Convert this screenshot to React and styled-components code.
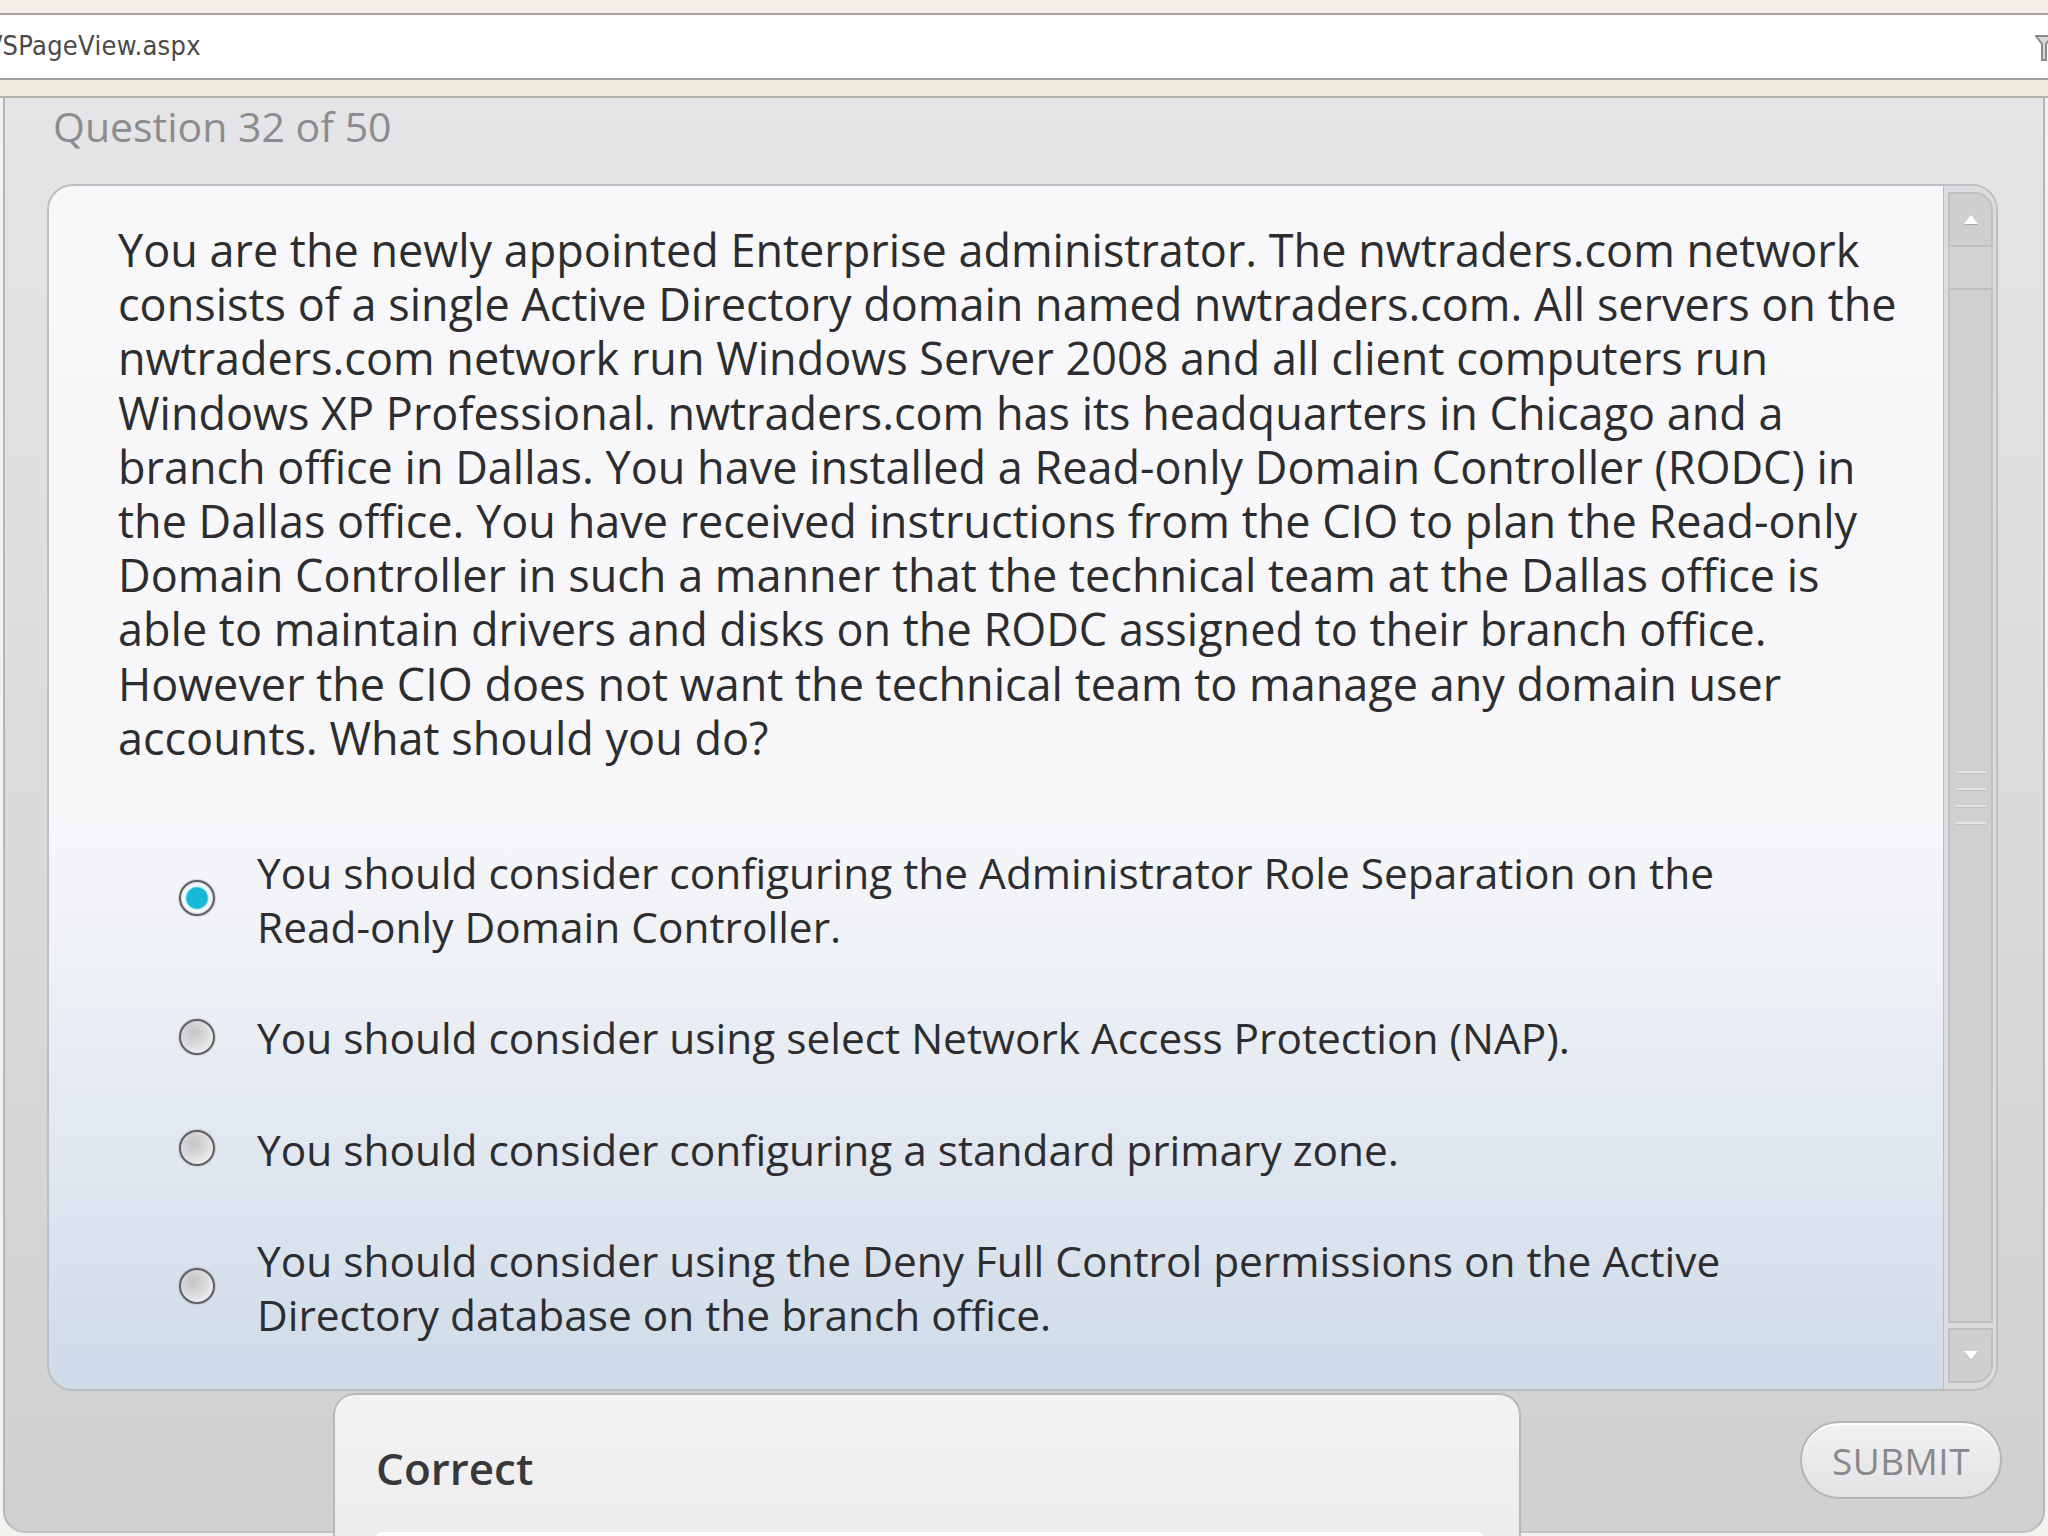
import React from "react";
import styled, { createGlobalStyle } from "styled-components";

const GlobalStyle = createGlobalStyle`
  html, body {
    margin: 0;
    padding: 0;
    background: #f3f2ee;
  }
  * {
    box-sizing: border-box;
  }
`;

const questionLines = [
  "You are the newly appointed Enterprise administrator. The nwtraders.com network",
  "consists of a single Active Directory domain named nwtraders.com. All servers on the",
  "nwtraders.com network run Windows Server 2008 and all client computers run",
  "Windows XP Professional. nwtraders.com has its headquarters in Chicago and a",
  "branch office in Dallas. You have installed a Read-only Domain Controller (RODC) in",
  "the Dallas office. You have received instructions from the CIO to plan the Read-only",
  "Domain Controller in such a manner that the technical team at the Dallas office is",
  "able to maintain drivers and disks on the RODC assigned to their branch office.",
  "However the CIO does not want the technical team to manage any domain user",
  "accounts. What should you do?",
];

const answers = [
  {
    id: "a",
    checked: true,
    lines: [
      "You should consider configuring the Administrator Role Separation on the",
      "Read-only Domain Controller.",
    ],
  },
  {
    id: "b",
    lines: ["You should consider using select Network Access Protection (NAP)."],
  },
  {
    id: "c",
    lines: ["You should consider configuring a standard primary zone."],
  },
  {
    id: "d",
    lines: [
      "You should consider using the Deny Full Control permissions on the Active",
      "Directory database on the branch office.",
    ],
  },
];

const Page = styled.div`
  width: 2048px;
  height: 1536px;
  overflow: hidden;
  display: flex;
  flex-direction: column;
  font-family: "Open Sans", "Noto Sans", sans-serif;
`;

const TopStrip = styled.div`
  flex: none;
  height: 13px;
  background: #f2f0e8;
`;

const AddressBar = styled.div`
  flex: none;
  height: 67px;
  background: #ffffff;
  border-top: 2px solid #a9a9a3;
  border-bottom: 2px solid #9f9f9a;
  display: flex;
  align-items: center;
  justify-content: space-between;
  padding-bottom: 2px;
`;

const Url = styled.span`
  font-family: "DejaVu Sans Condensed", "Liberation Sans", sans-serif;
  font-size: 27px;
  color: #4a4a4a;
  margin-left: -6px;
  letter-spacing: 0.3px;
`;

const InfoStrip = styled.div`
  flex: none;
  height: 18px;
  background: #edecdf;
  border-bottom: 2px solid #b3b3ab;
`;

const Panel = styled.div`
  flex: 1;
  min-height: 0;
  margin: 0 3px 3px 3px;
  display: flex;
  flex-direction: column;
  background: linear-gradient(to bottom, #e5e5e7 0%, #dcdcde 45%, #d0d0d1 100%);
  border-left: 2px solid #b6b6b8;
  border-right: 2px solid #b6b6b8;
  border-bottom: 2px solid #c2c2c4;
  border-radius: 0 0 22px 22px;
`;

const Header = styled.div`
  flex: none;
  padding: 4px 0 0 48px;
  height: 86px;
  font-size: 41px;
  line-height: 48px;
  color: #8c8c8e;
`;

const Card = styled.div`
  flex: none;
  height: 1207px;
  margin: 0 45px 0 42px;
  display: flex;
  border: 2px solid #bebec2;
  border-radius: 26px;
  overflow: hidden;
  background: linear-gradient(
    to bottom,
    #f8f8fa 0%,
    #f7f7fa 52%,
    #edf0f5 66%,
    #dde5ef 84%,
    #cfdbe9 100%
  );
`;

const CardBody = styled.div`
  flex: 1;
  padding: 37px 0 0 69px;
  color: #2d2d2f;
  font-size: 42.4px;
  line-height: 54.2px;
`;

const Line = styled.span`
  display: block;
  white-space: nowrap;
`;

const Question = styled.div`
  font-size: 45px;
  margin-bottom: 81px;
`;

const AnswerList = styled.div`
  display: flex;
  flex-direction: column;
  gap: 57px;
  padding-left: 61px;
`;

const Answer = styled.label`
  display: flex;
  align-items: center;
  gap: 42px;
`;

const Radio = styled.span`
  flex: none;
  width: 36px;
  height: 36px;
  margin-top: -4px;
  border-radius: 50%;
  border: 2px solid #5f5f62;
  box-shadow: 0 0 0 1px rgba(150, 150, 150, 0.35);
  background: ${(p) =>
    p.$checked
      ? "radial-gradient(circle, #18b8d9 0 10px, #7fdcef 11px, #f2fbfd 12px 14px, #e6e6e6 15px)"
      : "radial-gradient(circle at 38% 35%, #c4c4c6 0%, #dadadc 45%, #f7f7f8 90%)"};
`;

const ScrollColumn = styled.div`
  width: 53px;
  flex: none;
  display: flex;
  flex-direction: column;
  padding: 6px 3px 6px 4px;
  background: #dcdcde;
  border-left: 1px solid #bcbcbf;
`;

const ScrollButton = styled.div`
  height: 55px;
  flex: none;
  display: flex;
  align-items: center;
  justify-content: center;
  background: #cfcfd2;
  border: 2px solid #c0c0c3;
  border-radius: ${(p) => (p.$dir === "up" ? "0 18px 0 0" : "0 0 18px 0")};
`;

const Arrow = styled.span`
  width: 0;
  height: 0;
  border-left: 7px solid transparent;
  border-right: 7px solid transparent;
  ${(p) =>
    p.$dir === "up"
      ? "border-bottom: 9px solid #ffffff;"
      : "border-top: 9px solid #ffffff;"}
  filter: drop-shadow(0 1px 0 #a9a9ac);
`;

const Track = styled.div`
  height: 41px;
  flex: none;
  background: #d3d3d6;
  border-left: 2px solid #c6c6c9;
  border-right: 2px solid #c6c6c9;
`;

const Thumb = styled.div`
  flex: 1;
  margin-bottom: 5px;
  display: flex;
  align-items: center;
  justify-content: center;
  background: #d0d0d3;
  border: 2px solid #c0c0c3;
`;

const Grip = styled.div`
  width: 30px;
  height: 54px;
  margin-top: -16px;
  background: repeating-linear-gradient(
    to bottom,
    #e4e4e6 0 2px,
    #c2c2c5 2px 3px,
    transparent 3px 17px
  );
`;

const Footer = styled.div`
  flex: 1;
  min-height: 0;
  display: flex;
  align-items: flex-start;
  justify-content: space-between;
  padding: 2px 41px 0 328px;
`;

const Feedback = styled.div`
  width: 1188px;
  height: 180px;
  flex: none;
  padding: 47px 0 0 41px;
  border: 2px solid #b8b8bb;
  border-bottom: none;
  border-radius: 22px 22px 0 0;
  background: linear-gradient(to bottom, #f3f3f4 0%, #ebebed 100%);
`;

const FeedbackTitle = styled.div`
  font-size: 44px;
  line-height: 52px;
  font-weight: 600;
  color: #38383a;
`;

const FeedbackDetail = styled.div`
  margin-top: 38px;
  width: 1108px;
  height: 40px;
  background: #ffffff;
  border-radius: 6px 6px 0 0;
`;

const SubmitButton = styled.button`
  flex: none;
  margin-top: 28px;
  width: 202px;
  height: 78px;
  border: 2px solid #b4b4b7;
  border-radius: 39px;
  background: linear-gradient(to bottom, #f2f2f3 0%, #e2e2e4 100%);
  box-shadow: inset 0 2px 0 #ffffff;
  font-family: "Open Sans", "Noto Sans", sans-serif;
  font-size: 37px;
  letter-spacing: 0.5px;
  color: #88888b;
  padding: 0;
`;

const FilterIcon = () => (
  <svg width="18" height="30" viewBox="0 0 18 30" style={{ marginRight: -5, marginTop: 6 }}>
    <path d="M1 2 L17 2 L11 10 L11 26 L7 26 L7 10 Z" fill="#d8d8d8" stroke="#8a8a8a" strokeWidth="2" />
  </svg>
);

export default function App() {
  return (
    <>
      <GlobalStyle />
      <Page>
        <TopStrip />
        <AddressBar>
          <Url>/SPageView.aspx</Url>
          <FilterIcon />
        </AddressBar>
        <InfoStrip />
        <Panel>
          <Header>Question 32 of 50</Header>
          <Card>
            <CardBody>
              <Question>
                {questionLines.map((l, i) => (
                  <Line key={i}>{l}</Line>
                ))}
              </Question>
              <AnswerList>
                {answers.map((a) => (
                  <Answer key={a.id}>
                    <Radio $checked={a.checked} />
                    <div>
                      {a.lines.map((l, i) => (
                        <Line key={i}>{l}</Line>
                      ))}
                    </div>
                  </Answer>
                ))}
              </AnswerList>
            </CardBody>
            <ScrollColumn>
              <ScrollButton $dir="up">
                <Arrow $dir="up" />
              </ScrollButton>
              <Track />
              <Thumb>
                <Grip />
              </Thumb>
              <ScrollButton $dir="down">
                <Arrow $dir="down" />
              </ScrollButton>
            </ScrollColumn>
          </Card>
          <Footer>
            <Feedback>
              <FeedbackTitle>Correct</FeedbackTitle>
              <FeedbackDetail />
            </Feedback>
            <SubmitButton>SUBMIT</SubmitButton>
          </Footer>
        </Panel>
      </Page>
    </>
  );
}
